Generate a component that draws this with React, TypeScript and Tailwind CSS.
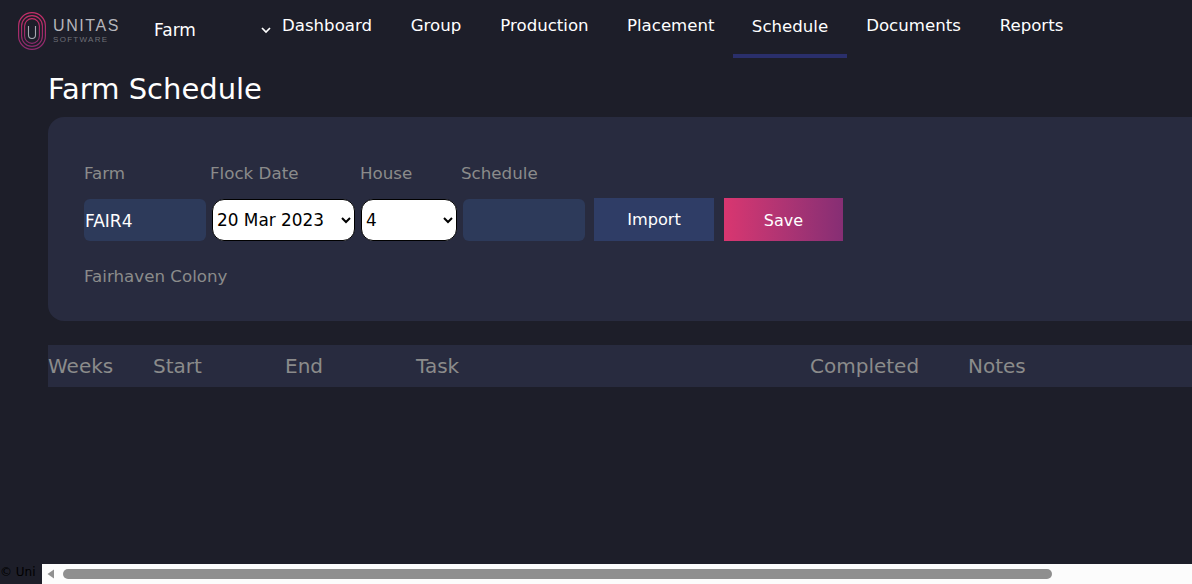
import React from "react";

const navItems = ["Dashboard", "Group", "Production", "Placement", "Schedule", "Documents", "Reports"];
const navClass: Record<string, string> = {
  Dashboard: "w-[90px] ml-0 mr-[38px]",
  Group: "w-[52px] mr-[38px]",
  Production: "w-[89px] mr-[38px]",
  Placement: "w-[87px] mr-[19px]",
  Schedule: "w-[114px] mr-[19px]",
  Documents: "w-[95px] mr-[38px]",
  Reports: "w-[65px]",
};

function Logo() {
  return (
    <svg width="28" height="38" viewBox="0 0 28 38" fill="none" className="shrink-0">
      <defs>
        <linearGradient id="lg" x1="0" y1="0" x2="0" y2="1">
          <stop offset="0" stopColor="#c62f68" />
          <stop offset="1" stopColor="#8c2a6e" />
        </linearGradient>
      </defs>
      <rect x="0.6" y="0.6" width="26.8" height="36.8" rx="13.4" stroke="url(#lg)" strokeWidth="1.2" />
      <rect x="3.6" y="3.6" width="20.8" height="30.8" rx="10.4" stroke="url(#lg)" strokeWidth="1.1" />
      <rect x="6.6" y="6.6" width="14.8" height="24.8" rx="7.4" stroke="url(#lg)" strokeWidth="1.1" />
      <path d="M10.5 14v9a3.5 3.5 0 0 0 7 0v-9" stroke="#a9a9b2" strokeWidth="1.1" />
    </svg>
  );
}

export default function App() {
  return (
    <div className="h-[584px] w-[1192px] overflow-hidden flex flex-col bg-[#1d1e29] font-['DejaVu_Sans',sans-serif]">
      <nav className="h-[58px] shrink-0 flex items-start">
        <div className="flex items-center pl-[18px] pt-[12px] w-[154px] shrink-0">
          <Logo />
          <div className="ml-[7px] -mt-[2px] flex flex-col font-['Liberation_Sans',sans-serif]">
            <span className="text-[16px] leading-[19px] tracking-[1.6px] text-[#b5b5bb]">UNITAS</span>
            <span className="text-[8px] leading-[9px] tracking-[1.3px] text-[#6f7078]">SOFTWARE</span>
          </div>
        </div>
        <span className="pt-[20px] text-[17px] leading-[20px] text-white w-[106px] shrink-0">Farm</span>
        <svg width="12" height="12" viewBox="0 0 12 12" fill="none" className="mt-[24px] ml-0 shrink-0">
          <path d="M2 4l4 4 4-4" stroke="#fff" strokeWidth="1.7" />
        </svg>
        <div className="flex ml-[10px]">
          {navItems.map((n) => (
            <a
              key={n}
              className={`h-[58px] text-[16.6px] leading-[20px] text-white text-center whitespace-nowrap shrink-0 ${navClass[n]} ${n === "Schedule" ? "pt-[17px] border-b-[4px] border-[#2a2f6b]" : "pt-[16px]"}`}
            >
              {n}
            </a>
          ))}
        </div>
      </nav>

      <main className="flex-1 pl-[48px] min-h-0">
        <h1 className="text-[29px] leading-[36px] mt-[13px] -mb-px text-white font-normal">Farm Schedule</h1>
        <section className="mt-[11px] h-[204px] rounded-l-[16px] bg-[#282b3f] pl-[36px] pt-[46px]">
          <div className="flex text-[16.7px] leading-[20px] text-[#8b8b8b]">
            <span className="w-[126px]">Farm</span>
            <span className="w-[150px]">Flock Date</span>
            <span className="w-[101px]">House</span>
            <span>Schedule</span>
          </div>
          <div className="flex items-center mt-[15px]">
            <div className="w-[122px] h-[42px] rounded-[6px] bg-[#2d3a5a] text-white text-[17px] leading-[44px] pl-px">FAIR4</div>
            <select defaultValue="20 Mar 2023" className="ml-[6px] w-[143px] h-[42px] rounded-[12px] border border-black bg-white text-black text-[16.9px]">
              <option>20 Mar 2023</option>
            </select>
            <select defaultValue="4" className="ml-[6px] w-[96px] h-[42px] rounded-[12px] border border-black bg-white text-black text-[16.9px]">
              <option>4</option>
            </select>
            <div className="ml-[6px] w-[122px] h-[42px] rounded-[6px] bg-[#2d3a5a]" />
            <button className="ml-[9px] w-[120px] h-[43px] pt-[2px] bg-[#2f3d66] text-white text-[16.2px]">Import</button>
            <button className="ml-[10px] w-[119px] h-[43px] pt-[2px] bg-gradient-to-r from-[#d93670] to-[#862e74] text-white text-[16px]">Save</button>
          </div>
          <p className="mt-[25px] text-[16.7px] leading-[20px] text-[#8b8b8b]">Fairhaven Colony</p>
        </section>
        <div className="mt-[24px] h-[42px] bg-[#282b3f] flex items-center text-[20px] text-[#8b8b8b]">
          <span className="w-[105px]">Weeks</span>
          <span className="w-[132px]">Start</span>
          <span className="w-[131px]">End</span>
          <span className="w-[394px]">Task</span>
          <span className="w-[158px]">Completed</span>
          <span>Notes</span>
        </div>
      </main>

      <footer className="h-[20px] shrink-0 flex">
        <span className="w-[42px] shrink-0 text-[12px] leading-[14px] pt-[1px] whitespace-nowrap overflow-hidden text-black">© Uni</span>
        <div className="flex-1 bg-[#fcfcfc] flex items-center">
          <svg width="10" height="10" viewBox="0 0 10 10" className="ml-[4px] shrink-0">
            <path d="M8 0.5v9L1.5 5z" fill="#8f8f8f" />
          </svg>
          <div className="ml-[7px] w-[989px] h-[10px] rounded-full bg-[#8f8f8f]" />
        </div>
      </footer>
    </div>
  );
}
